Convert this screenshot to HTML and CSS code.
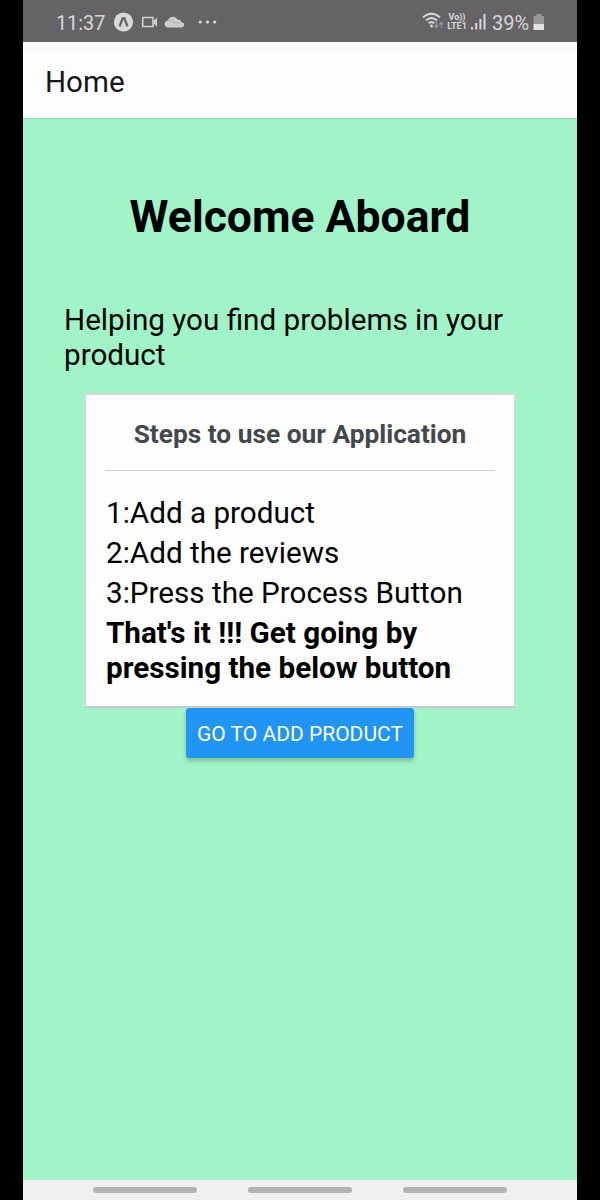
FILE: index.html
```html
<!DOCTYPE html>
<html lang="en">
<head>
<meta charset="utf-8">
<title>Home</title>
<link rel="stylesheet" href="styles.css">
</head>
<body>
<div class="phone">
  <div class="status">
    <span class="time">11:37</span>
    <svg class="notifications" width="108" height="24" viewBox="0 0 108 24">
      <circle cx="10.5" cy="12" r="9.6" fill="#dad9da"/>
      <path d="M6.6 16.300 9.600 8.300h1.800L14.400 16.300" fill="none" stroke="#656365" stroke-width="2.300"/>
      <path d="M29.700 7.500H40v9H29.700z" fill="none" stroke="#d2d1d2" stroke-width="1.600"/>
      <path d="m39.500 12 4.500-4.600v9.400z" fill="#d2d1d2"/>
      <path d="M56.500 17.500c-5 0-5-6.500-.5-7 1-4.700 7.800-4.800 9.300-1 2.600-.3 4 1 4.200 2.800 4 .4 3.500 5.200-.5 5.200z" fill="#cecdce" transform="translate(-1 0)"/>
      <path d="M55.500 10.500c4 0 6 2 7 4l5-2.200" fill="none" stroke="#b5b3b5"/>
      <g fill="#dddcdd"><circle cx="87.300" cy="12" r="1.600"/><circle cx="94.500" cy="12" r="1.600"/><circle cx="101.700" cy="12" r="1.600"/></g>
    </svg>
    <svg class="wifi" width="22" height="20" viewBox="0 0 22 20">
      <g fill="none" stroke="#dddcdd" stroke-width="1.900"><path d="M1 6.300Q9.500-1 18 6.300M4 9.500Q9.500 4.500 15 9.500M6.700 12.300Q9.500 9.800 12.300 12.300"/></g>
      <circle cx="9.500" cy="15" r="1.500" fill="#dddcdd"/>
      <path d="M14.300 11v5M12.500 14.500l1.800 2 1.800-2M19.300 17v-5M17.500 13.500l1.800-2 1.800 2" fill="none" stroke="#969496" stroke-width="1.300"/>
    </svg>
    <span class="volte"><span>Vo))</span><span>LTE1</span></span>
    <svg class="signal" width="15" height="18" viewBox="0 0 15 18" fill="#d8d7d8">
      <path d="M0 14h2v2.500H0zM4.200 10h2v6.500h-2zM8.400 6h2v10.500h-2zM12.500 1h2v15.500h-2z"/>
    </svg>
    <span class="percent">39%</span>
    <svg class="battery" width="12" height="18" viewBox="0 0 12 18">
      <path d="M3.500 1h5v2H11v8H.5V3h3z" fill="#969496"/><path d="M.5 11H11v6H.5z" fill="#e3e2e3"/>
    </svg>
  </div>
  <header class="appbar">Home</header>
  <main class="content">
    <h1 class="title">Welcome Aboard</h1>
    <p class="intro">Helping you find problems in your product</p>
    <section class="card">
      <h2 class="card-title">Steps to use our Application</h2>
      <p class="step">1:Add a product</p>
      <p class="step">2:Add the reviews</p>
      <p class="step">3:Press the Process Button</p>
      <p class="step final">That's it !!! Get going by pressing the below button</p>
    </section>
    <button class="action">GO TO ADD PRODUCT</button>
  </main>
  <nav class="navbar"><span class="pill"></span><span class="pill"></span><span class="pill"></span></nav>
</div>
</body>
</html>
```

FILE: styles.css
```css
* { box-sizing: border-box; }
body { margin: 0; background: #000; font-family: Roboto, "Noto Sans", sans-serif; color: #000; }
h1, h2, p { margin: 0; }
.phone { width: 554px; height: 1200px; margin-left: 23px; display: flex; flex-direction: column; overflow: hidden; }
.status { height: 42px; flex: none; display: flex; align-items: center; padding: 3px 32px 0 33px; background: #656365; color: #d8d7d8; }
.time { width: 49px; margin-right: 8px; font-size: 19.8px; line-height: 24px; padding-top: 2px; white-space: nowrap; }
.notifications { margin-top: -2px; }
.wifi { margin: -3px 3px 0 auto; }
.volte { width: 20px; margin: -2px 4px 0 0; display: flex; flex-direction: column; font-size: 9px; line-height: 9px; font-weight: 700; align-items: center; white-space: nowrap; }
.signal { margin: -1px 6px 0 0; }
.percent { width: 37px; margin-right: 4px; font-size: 20px; line-height: 24px; padding-top: 1px; white-space: nowrap; }
.battery { margin-top: -1px; }
.appbar { height: 76px; flex: none; padding: 22px 22px 0; background: linear-gradient(#fafafa 0 11px, #fefdfe 11px); font-size: 29.6px; line-height: 36px; color: #17171a; position: relative; box-shadow: 0 1px 1px rgba(0,0,0,.1); }
.content { flex: 1; background: #a1f4c7; display: flex; flex-direction: column; align-items: center; padding-top: 73px; }
.title { font-size: 44.5px; line-height: 53px; font-weight: 700; }
.intro { width: 472px; margin: 58px 0 21px; font-size: 29.65px; line-height: 35px; }
.card { width: 432px; height: 315px; padding: 21px 19px 0 20px; background: #fefdfe; border: 2px solid #cbddd5; border-bottom-color: #c5cdca; }
.card-title { height: 55px; margin: 0 0 24px -1px; padding-left: 0; border-bottom: 1px solid #cfced1; text-align: center; font-size: 26.3px; line-height: 36px; font-weight: 700; color: #43484d; }
.step { font-size: 29.65px; line-height: 35px; margin-bottom: 5px; white-space: nowrap; }
.final { font-weight: 700; white-space: normal; }
.action { width: 228px; height: 50px; border: 0; border-radius: 3px; padding: 2px 0 0; background: #2095f3; color: #fff; font: 400 21px/48px Roboto, sans-serif; white-space: nowrap; box-shadow: 0 3px 4px rgba(0,0,0,.22); }
.navbar { height: 20px; flex: none; display: flex; gap: 51px; padding: 7px 70px; background: #f1eff1; }
.pill { width: 104px; height: 6px; border-radius: 3px; background: #b5b3b6; }
```
